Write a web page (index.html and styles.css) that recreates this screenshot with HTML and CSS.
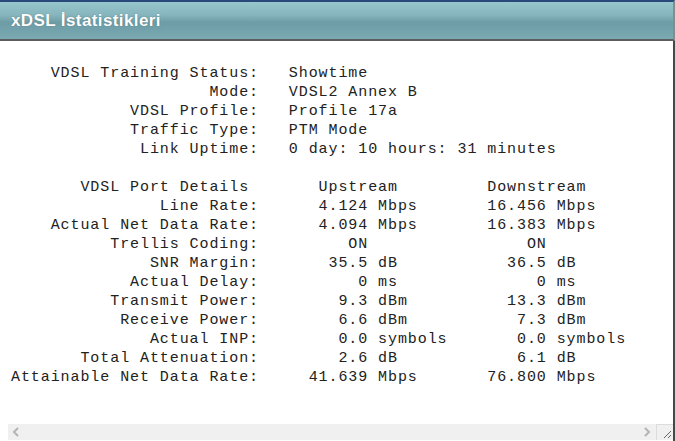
FILE: index.html
```html
<!DOCTYPE html>
<html>
<head>
<meta charset="utf-8">
<link rel="stylesheet" href="styles.css">
</head>
<body>
<div class="header"><span class="title">xDSL İstatistikleri</span></div>
<div class="content">
  <div class="box">
<pre class="stats">

    VDSL Training Status:   Showtime
                    Mode:   VDSL2 Annex B
            VDSL Profile:   Profile 17a
            Traffic Type:   PTM Mode
             Link Uptime:   0 day: 10 hours: 31 minutes

       VDSL Port Details       Upstream         Downstream
               Line Rate:      4.124 Mbps       16.456 Mbps
    Actual Net Data Rate:      4.094 Mbps       16.383 Mbps
          Trellis Coding:         ON                ON
              SNR Margin:       35.5 dB           36.5 dB
            Actual Delay:          0 ms              0 ms
          Transmit Power:        9.3 dBm          13.3 dBm
           Receive Power:        6.6 dBm           7.3 dBm
              Actual INP:        0.0 symbols       0.0 symbols
       Total Attenuation:        2.6 dB            6.1 dB
Attainable Net Data Rate:     41.639 Mbps       76.800 Mbps
</pre>
    <div class="hscroll">
      <div class="track">
        <svg class="arrow" width="8" height="10" viewBox="0 0 8 10"><polyline points="6,1 2,5 6,9" fill="none" stroke="#b4b4b4" stroke-width="2"/></svg>
        <svg class="arrow" width="8" height="10" viewBox="0 0 8 10"><polyline points="2,1 6,5 2,9" fill="none" stroke="#b4b4b4" stroke-width="2"/></svg>
      </div>
      <div class="corner">
        <svg width="16" height="16" viewBox="0 0 16 16"><line x1="14" y1="7" x2="7" y2="14" stroke="#666" stroke-width="1"/><line x1="14" y1="11" x2="11" y2="14" stroke="#666" stroke-width="1"/></svg>
      </div>
    </div>
  </div>
</div>
</body>
</html>
```
FILE: styles.css
```css
html, body {
  margin: 0;
  padding: 0;
  background: #ffffff;
  overflow: hidden;
}
.header {
  height: 37px;
  border-top: 2px solid #2a4a7c;
  border-bottom: 2px solid #5c5c5c;
  border-right: 2px solid #8a8a8a;
  background: linear-gradient(to bottom, #97c6cd 0%, #86b5bd 35%, #6d9ca6 55%, #73a3ac 80%, #7caab2 100%);
  display: flex;
  align-items: center;
  padding-left: 11px;
  box-sizing: content-box;
}
.title {
  font-family: "Liberation Sans", Arial, sans-serif;
  font-weight: bold;
  font-size: 17px;
  letter-spacing: 0.4px;
  color: #ffffff;
  text-shadow: 0 0 1px rgba(40, 70, 80, 0.6);
  margin-top: 1px;
}
.content {
  padding-left: 8px;
}
.box {
  height: 400px;
  border-right: 2px solid #474747;
  display: flex;
  flex-direction: column;
}
.stats {
  flex: 1;
  margin: 0;
  padding: 4px 0 0 3px;
  font-family: "Liberation Mono", "Courier New", monospace;
  font-size: 15px;
  letter-spacing: 0.92px;
  line-height: 19px;
  color: #222222;
  overflow: hidden;
}
.hscroll {
  height: 16px;
  margin-bottom: 1px;
  display: flex;
}
.track {
  flex: 1;
  background: #f0f0f0;
  display: flex;
  justify-content: space-between;
  align-items: center;
  padding: 0 5px 0 4px;
}
.corner {
  width: 17px;
  background: #f0f0f0;
  border-left: 1px solid #dcdcdc;
  border-top: 1px solid #dcdcdc;
  box-sizing: border-box;
  display: flex;
  align-items: flex-end;
  justify-content: flex-end;
}
.corner svg {
  display: block;
}
.arrow {
  display: block;
}
```
